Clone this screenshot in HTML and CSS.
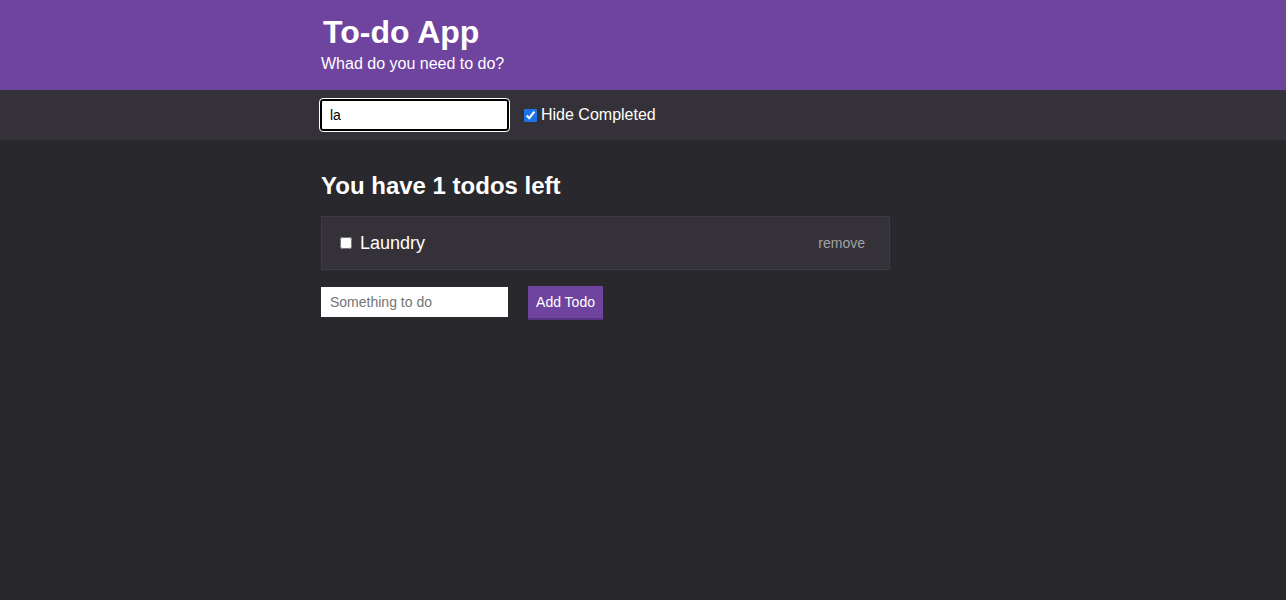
FILE: index.html
```html
<!DOCTYPE html>
<html>
<head>
<meta charset="utf-8">
<link rel="stylesheet" href="styles.css">
</head>
<body>
<header class="hero">
  <div class="wrap">
    <h1 class="title">To-do App</h1>
    <p class="subtitle">Whad do you need to do?</p>
  </div>
</header>
<div class="toolbar">
  <div class="wrap toolbar-row">
    <input class="filter" type="text" value="la">
    <label class="hide"><input type="checkbox" checked> Hide Completed</label>
  </div>
</div>
<main class="wrap main">
  <h2 class="count">You have 1 todos left</h2>
  <ul class="list">
    <li class="item">
      <label class="item-label"><input type="checkbox"> Laundry</label>
      <button class="remove">remove</button>
    </li>
  </ul>
  <form class="add">
    <input class="add-input" type="text" placeholder="Something to do">
    <button class="add-btn" type="button">Add Todo</button>
  </form>
</main>
</body>
</html>
```
FILE: styles.css
```css
* { box-sizing: border-box; }
html, body { margin: 0; padding: 0; }
body {
  background: #29282d;
  color: #fff;
  font-family: "Liberation Sans", Arial, sans-serif;
  height: 600px;
}
.wrap {
  width: 569px;
  margin-left: 321px;
}
.hero {
  background: #6f449f;
  height: 90px;
  padding-top: 13px;
}
.title {
  margin: 0 0 0 2px;
  font-size: 32px;
  line-height: 38px;
  font-weight: bold;
}
.subtitle {
  margin: 4px 0 0 0;
  font-size: 16px;
  line-height: 18px;
}
.toolbar {
  background: #343238;
  height: 50px;
}
.toolbar-row {
  display: flex;
  align-items: center;
  height: 50px;
  margin-left: 320px;
}
.filter {
  width: 189px;
  height: 32px;
  border: 2px solid #000;
  border-radius: 3px;
  outline: 1px solid #fff;
  outline-offset: 0;
  padding: 0 8px;
  font: 14px "Liberation Sans", Arial, sans-serif;
  color: #000;
  background: #fff;
}
.hide {
  margin-left: 15px;
  font-size: 16px;
  display: flex;
  align-items: center;
}
.hide input {
  margin: 0 4px 0 0;
  width: 13px;
  height: 13px;
  accent-color: #1a73e8;
}
.main {
  padding-top: 32px;
}
.count {
  margin: 0 0 16px 0;
  font-size: 24px;
  line-height: 28px;
  font-weight: bold;
}
.list {
  list-style: none;
  margin: 0;
  padding: 0;
}
.item {
  display: flex;
  align-items: center;
  justify-content: space-between;
  height: 54px;
  background: #343238;
  border: 1px solid #3e3c42;
  padding: 0 24px 0 18px;
}
.item-label {
  display: flex;
  align-items: center;
  font-size: 18px;
}
.item-label input {
  margin: 0 8px 0 0;
  width: 12px;
  height: 12px;
}
.remove {
  background: none;
  border: none;
  color: #a3a1a6;
  font: 14px "Liberation Sans", Arial, sans-serif;
  padding: 0;
}
.add {
  display: flex;
  align-items: center;
  margin-top: 16px;
}
.add-input {
  width: 187px;
  height: 30px;
  border: none;
  padding: 0 9px;
  font: 14px "Liberation Sans", Arial, sans-serif;
  background: #fff;
  margin-top: -2px;
}
.add-input::placeholder { color: #757575; }
.add-btn {
  margin-left: 20px;
  height: 34px;
  width: 75px;
  background: #6f449f;
  color: #fff;
  border: none;
  border-bottom: 2px solid #563385;
  font: 14px "Liberation Sans", Arial, sans-serif;
  padding: 0;
}
```
